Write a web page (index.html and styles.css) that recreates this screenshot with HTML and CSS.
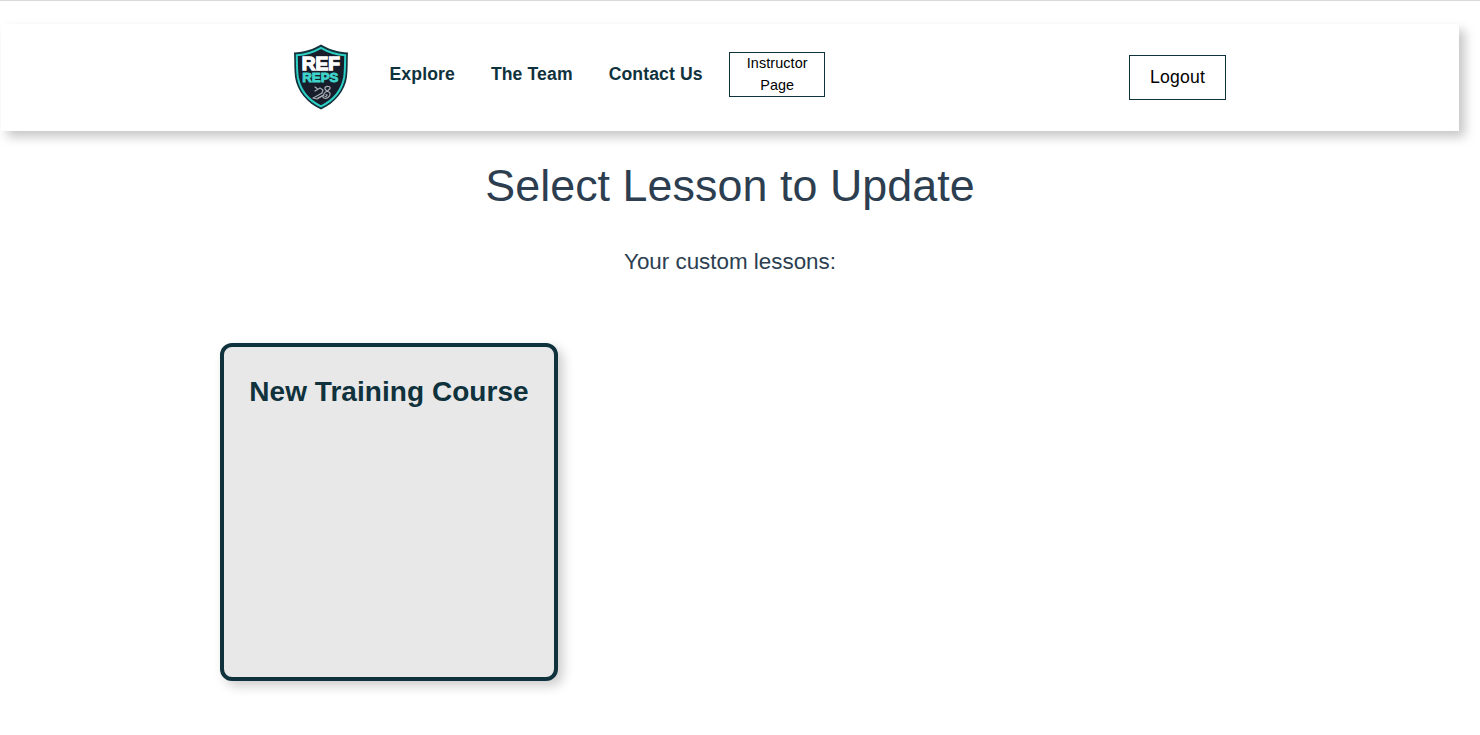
FILE: index.html
```html
<!DOCTYPE html>
<html lang="en">
<head>
<meta charset="utf-8">
<title>Select Lesson to Update</title>
<link rel="stylesheet" href="styles.css">
</head>
<body>
<div class="app">
  <header class="navbar">
    <svg class="logo" viewBox="0 0 56 66" width="56" height="66" role="img" aria-label="Ref Reps">
      <path d="M28 .5C21 5 11 8 1 8.500C1.500 16 1 24 2 33c2 14 12 26 26 32.500C42 59 52 47 54 33c1-9 .5-17 1-24.500C45 8 35 5 28 .5Z" fill="#14303a"/>
      <path d="M28 3.800C21 8 13 10.500 3.800 11.200c.2 7 0 15 1 22C7 45 15 56 28 62.300 41 56 49 45 51.200 33.200c1-7 .8-15 1-22C43 10.500 35 8 28 3.800Z" fill="#171d2b" stroke="#2ccfc3" stroke-width="2"/>
      <text class="logo-ref" x="27.800" y="26" textLength="38" lengthAdjust="spacingAndGlyphs">REF</text>
      <text class="logo-reps" x="27.300" y="38" textLength="36" lengthAdjust="spacingAndGlyphs">REPS</text>
      <g fill="none" stroke="#a9adb5" stroke-width="1.200" stroke-linecap="round" stroke-linejoin="round">
        <path d="M22 43l2 1.500M22 47l5-3 3 2-1 3-7 4-2 1 4 1 5-3"/>
        <path d="M32 43.500c2-2 6-1 5 1l-3 3c4 0 4 4 1 6s-6 0-5-2 3-4 4-4-3-2-2-4Z"/>
        <path d="M31 51l-6 3M33 50.500c2 0 1 2-1 2"/>
      </g>
    </svg>
    <nav class="links">
      <a class="link">Explore</a>
      <a class="link">The Team</a>
      <a class="link">Contact Us</a>
    </nav>
    <button class="button instructor"><span class="instructor-label">Instructor Page</span></button>
    <button class="button logout">Logout</button>
  </header>
  <main class="content">
    <h1 class="title">Select Lesson to Update</h1>
    <p class="subtitle">Your custom lessons:</p>
    <section class="lessons">
      <article class="card"><h2 class="card-title">New Training Course</h2></article>
    </section>
  </main>
</div>
</body>
</html>
```
FILE: styles.css
```css
* { box-sizing: border-box; }
body {
  margin: 0;
  height: 735px;
  overflow: hidden;
  background: #fff;
  border-top: 1px solid #dadada;
  font-family: "Liberation Sans", Arial, sans-serif;
  color: #2c3e50;
}
.app { width: 1458px; margin: 23px 0 0 1px; }
.navbar {
  display: flex;
  align-items: flex-start;
  height: 107px;
  padding: 20px 233px 0 292px;
  background: #fff;
  box-shadow: 6px 6px 10px rgba(0, 0, 0, .22);
}
.logo { flex: none; display: block; margin-left: -.5px; }
.logo-ref, .logo-reps { font-family: "Liberation Sans", Arial, sans-serif; font-weight: 700; text-anchor: middle; }
.logo-ref { font-size: 18.500px; fill: #fff; stroke: #fff; stroke-width: 1.400px; }
.logo-reps { font-size: 12.500px; fill: #3fd3cb; stroke: #3fd3cb; stroke-width: .9px; }
.links { display: flex; gap: 36px; margin: 19px 0 0 41px; }
.link { font-size: 17.6px; line-height: 22px; font-weight: 700; letter-spacing: .12px; color: #0f323d; white-space: nowrap; }
.button {
  flex: none;
  font-family: inherit;
  color: #000;
  background: #fff;
  border: 1px solid #0f323d;
  padding: 0;
  height: 45px;
}
.instructor { width: 96px; margin: 8px 0 0 26.500px; padding: 0 12px; font-size: 14.4px; line-height: 22px; letter-spacing: .1px; }
.instructor-label { display: block; margin-top: -1px; }
.logout { width: 97px; margin: 11px 0 0 auto; font-size: 17.6px; letter-spacing: .2px; }
.content { text-align: center; }
.title { margin: 28px 0 0; font-size: 44.8px; line-height: 52px; font-weight: 400; letter-spacing: .06px; }
.subtitle { margin: 38px 0 0; font-size: 22.4px; line-height: 26px; }
.lessons { display: flex; margin: 68px 0 0 219px; }
.card {
  width: 338px;
  height: 338px;
  padding-top: 29px;
  background: #e8e8e8;
  border: 4px solid #0f323d;
  border-radius: 12px;
  box-shadow: 5px 5px 12px rgba(0, 0, 0, .2);
}
.card-title { margin: 0; font-size: 28px; line-height: 32px; letter-spacing: .05px; color: #0f323d; white-space: nowrap; }
```
